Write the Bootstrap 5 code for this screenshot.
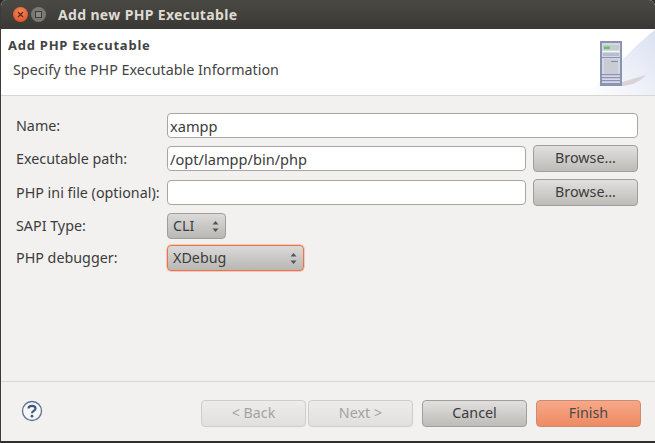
<!DOCTYPE html>
<html lang="en"><head><meta charset="utf-8"><title>Add new PHP Executable</title>
<link rel="stylesheet" href="https://cdn.jsdelivr.net/npm/bootstrap@5.3.0/dist/css/bootstrap.min.css">
<style>
html,body{height:443px;overflow:hidden}
body{font-family:"Noto Sans","Liberation Sans",sans-serif;font-size:14px;color:#3c3c3c;background:#2c2c2a}
.win{width:655px;height:443px;display:flex;flex-direction:column;background:#f2f1f0;border-left:1px solid #3c3b37;border-bottom:2px solid #2f2f2d;border-radius:6px 6px 0 0;overflow:hidden}
.tbar{height:29px;background:linear-gradient(#4a4944,#393834);flex:none;display:flex;align-items:center;padding-left:12px;gap:3px;color:#dfdbd2;font-weight:700;font-size:14px;letter-spacing:.35px}
.wbtn{width:15px;height:15px;border-radius:50%;display:flex;align-items:center;justify-content:center;flex:none}
.wclose{background:radial-gradient(circle at 50% 35%,#f58a5c,#d9481a)}
.wmax{background:#7a7974}
.ttxt{margin-left:9px}
.hdr{height:67px;flex:none;background:#fff;border-bottom:1px solid #d8d6d3;position:relative;overflow:hidden;padding:7px 0 0 7px}
.htitle{font-weight:700;font-size:13px;letter-spacing:.75px;color:#444;line-height:18px}
.hsub{font-size:14.3px;line-height:20px;margin:6px 0 0 5px;color:#444}
.hart{position:absolute;right:0;top:0}
.fbody{flex:1;padding:17px 17px 0 15px;display:flex;flex-direction:column;border-bottom:1px solid #d8d6d3}
.frow{display:flex;align-items:center}
.flabel{width:151px;flex:none;font-size:14.3px;color:#3c3c3c;white-space:nowrap}
.tinput{height:25px;background:#fff;border:1px solid #aaa69f;border-radius:4px;padding:0 2px;font-size:14.6px;line-height:21px;color:#3c3c3c;font-family:inherit;flex:1;min-width:0;outline:0}
.r1{height:25px;margin-bottom:7px}
.r2{height:27px;margin-bottom:7px}
.r3{height:27px;margin-bottom:7px}
.r4{height:26px;margin-bottom:6px}
.r5{height:26px}
.gbtn{background:linear-gradient(#e2e0de,#bebcb9);border:1px solid #a09e9a;border-radius:4px;color:#3c3c3c;font-size:14.3px;height:27px;padding:0;line-height:1}
.gbtn:hover{background:linear-gradient(#e2e0de,#bebcb9);border-color:#a09e9a;color:#3c3c3c}
.brw{width:105px;margin-left:7px;flex:none}
.combo{height:26px;display:flex;align-items:center;justify-content:space-between;background:linear-gradient(#dcdad8,#b9b7b4);border:1px solid #a09e9a;border-radius:4px;padding:0 6px 0 5px;font-size:14.3px;color:#3c3c3c}
.cli{width:59px}
.dbg{width:137px;border:1px solid #e8764a;box-shadow:0 0 0 .5px #f0a283}
.ftr{height:59px;flex:none;display:flex;align-items:flex-start;padding:18px 0 0 20px}
.fbtn{width:105px;height:27px;flex:none}
.dis{background:linear-gradient(#eeecea,#e2e0de);border-color:#cfcdca;color:#a5a29d}
.dis:disabled{background:linear-gradient(#eeecea,#e2e0de);border-color:#cfcdca;color:#a5a29d;opacity:1}
.fin{background:linear-gradient(#f7a888,#ee8a63);border-color:#c98d72;color:#4a4a4a}
.fin:hover{background:linear-gradient(#f7a888,#ee8a63);border-color:#c98d72;color:#4a4a4a}
.fnext{margin-left:2px}.fcan{margin-left:9px}.fin{margin-left:9px;margin-right:14px}
</style></head><body>
<div class="win">
<div class="tbar">
<span class="wbtn wclose"><svg width="7" height="7" viewBox="0 0 7 7"><path d="M1 1l5 5M6 1l-5 5" stroke="#5a2410" stroke-width="1.2"/></svg></span>
<span class="wbtn wmax"><svg width="7" height="7" viewBox="0 0 7 7"><rect x=".5" y=".5" width="6" height="6" fill="#8c8b86" stroke="#3c3b37"/></svg></span>
<span class="ttxt">Add new PHP Executable</span>
</div>
<div class="hdr">
<svg class="hart" width="75" height="66" viewBox="0 0 75 66">
<defs><linearGradient id="g1" x1="0" y1="1" x2="1" y2="0"><stop offset="0" stop-color="#fff"/><stop offset="1" stop-color="#dbe1f1"/></linearGradient></defs>
<path d="M5 66C26 50 52 18 75 1V66Z" fill="url(#g1)"/>
<path d="M32 56L66 46C60 53 50 57 40 57Z" fill="#d9d2d6"/>
<rect x="20" y="12" width="22" height="45" fill="#8b93b3"/>
<rect x="22" y="14" width="18" height="40" fill="#d4d8e3"/>
<rect x="23" y="16" width="16" height="5" fill="#c4cdc6"/><rect x="24" y="17.500" width="6" height="2.500" fill="#66c46c"/>
<rect x="22" y="22" width="18" height="1" fill="#f4f5f8"/>
<rect x="23" y="24" width="16" height="3" fill="#b7bccf"/>
<rect x="22" y="28" width="18" height="1" fill="#8b93b3"/>
<rect x="24" y="30" width="14" height="15" fill="#c9ccd4"/><rect x="31" y="32" width="7" height="1" fill="#8288a4"/>
<g fill="#8b93b3"><rect x="22" y="45" width="18" height="1.200"/><rect x="22" y="48" width="18" height="1.200"/><rect x="22" y="51" width="18" height="1.200"/></g>
</svg>
<div class="htitle">Add PHP Executable</div>
<div class="hsub">Specify the PHP Executable Information</div>
</div>
<div class="fbody">
<div class="frow r1"><span class="flabel">Name:</span><input class="tinput" type="text" value="xampp"></div>
<div class="frow r2"><span class="flabel">Executable path:</span><input class="tinput" type="text" value="/opt/lampp/bin/php"><button class="btn gbtn brw" type="button">Browse...</button></div>
<div class="frow r3"><span class="flabel">PHP ini file (optional):</span><input class="tinput" type="text" value=""><button class="btn gbtn brw" type="button">Browse...</button></div>
<div class="frow r4"><span class="flabel">SAPI Type:</span><div class="combo cli"><span>CLI</span><svg width="7" height="13" viewBox="0 0 7 13"><path d="M3.500 1L6.500 4.500H.5ZM3.500 12L.5 8.500H6.500Z" fill="#555"/></svg></div></div>
<div class="frow r5"><span class="flabel">PHP debugger:</span><div class="combo dbg"><span>XDebug</span><svg width="7" height="13" viewBox="0 0 7 13"><path d="M3.500 1L6.500 4.500H.5ZM3.500 12L.5 8.500H6.500Z" fill="#555"/></svg></div></div>
</div>
<div class="ftr">
<svg width="22" height="22" viewBox="0 0 22 22"><circle cx="11" cy="11" r="9.500" fill="#f6f7f9" stroke="#5b7396" stroke-width="1.300"/><path d="M7.500 8.500C7.500 5 14.500 5 14.500 8.500C14.500 11 11 10.800 11 13.300" fill="none" stroke="#43597c" stroke-width="2.200"/><circle cx="11" cy="16.200" r="1.400" fill="#43597c"/></svg>
<div class="d-flex ms-auto">
<button class="btn gbtn fbtn dis" type="button" disabled>&lt; Back</button>
<button class="btn gbtn fbtn dis fnext" type="button" disabled>Next &gt;</button>
<button class="btn gbtn fbtn fcan" type="button">Cancel</button>
<button class="btn gbtn fbtn fin" type="button">Finish</button>
</div>
</div>
</div>
</body></html>
